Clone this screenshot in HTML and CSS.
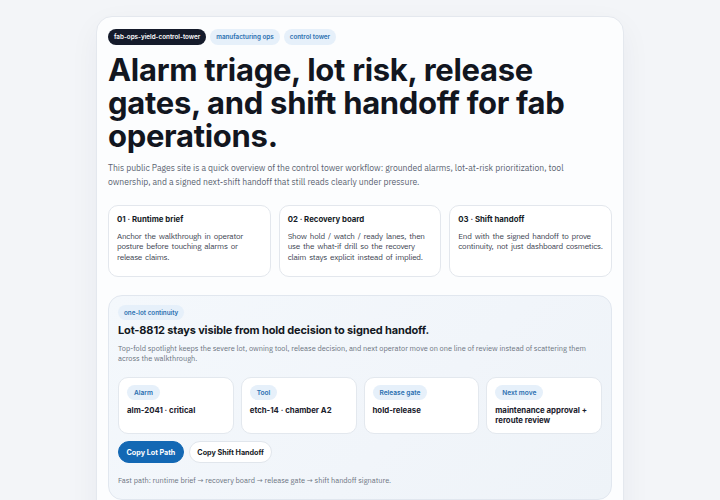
FILE: index.html
```html
<!DOCTYPE html>
<html lang="en">
<head>
<meta charset="utf-8">
<title>Fab Ops Yield Control Tower</title>
<link rel="stylesheet" href="styles.css">
</head>
<body>
<main class="shell">
  <section class="hero">
    <div class="chips">
      <span class="chip chip-dark">fab-ops-yield-control-tower</span>
      <span class="chip chip-soft">manufacturing ops</span>
      <span class="chip chip-soft">control tower</span>
    </div>
    <h1 class="title">Alarm triage, lot risk, release gates, and shift handoff for fab operations.</h1>
    <p class="lede">This public Pages site is a quick overview of the control tower workflow: grounded alarms, lot-at-risk prioritization, tool ownership, and a signed next-shift handoff that still reads clearly under pressure.</p>

    <div class="steps">
      <article class="step">
        <h2 class="step-title">01 · Runtime brief</h2>
        <p class="step-text">Anchor the walkthrough in operator posture before touching alarms or release claims.</p>
      </article>
      <article class="step">
        <h2 class="step-title">02 · Recovery board</h2>
        <p class="step-text">Show hold / watch / ready lanes, then use the what-if drill so the recovery claim stays explicit instead of implied.</p>
      </article>
      <article class="step">
        <h2 class="step-title">03 · Shift handoff</h2>
        <p class="step-text">End with the signed handoff to prove continuity, not just dashboard cosmetics.</p>
      </article>
    </div>

    <section class="spotlight">
      <span class="chip chip-soft chip-block">one-lot continuity</span>
      <h2 class="spot-title">Lot-8812 stays visible from hold decision to signed handoff.</h2>
      <p class="spot-text">Top-fold spotlight keeps the severe lot, owning tool, release decision, and next operator move on one line of review instead of scattering them across the walkthrough.</p>

      <div class="facts">
        <div class="fact">
          <span class="chip chip-soft chip-tag">Alarm</span>
          <strong class="fact-value">alm-2041 · critical</strong>
        </div>
        <div class="fact">
          <span class="chip chip-soft chip-tag">Tool</span>
          <strong class="fact-value">etch-14 · chamber A2</strong>
        </div>
        <div class="fact">
          <span class="chip chip-soft chip-tag">Release gate</span>
          <strong class="fact-value">hold-release</strong>
        </div>
        <div class="fact">
          <span class="chip chip-soft chip-tag">Next move</span>
          <strong class="fact-value">maintenance approval + reroute review</strong>
        </div>
      </div>

      <div class="actions">
        <button class="btn btn-primary" type="button">Copy Lot Path</button>
        <button class="btn btn-ghost" type="button">Copy Shift Handoff</button>
      </div>

      <p class="fast-path">Fast path: runtime brief → recovery board → release gate → shift handoff signature.</p>
    </section>
  </section>
</main>
</body>
</html>
```
FILE: styles.css
```css
* { box-sizing: border-box; }

html, body {
  margin: 0;
  padding: 0;
}

body {
  background: #f3f5f8;
  font-family: "IBM Plex Sans", Roboto, "Noto Sans", sans-serif;
  color: #1b2230;
  height: 500px;
  overflow: hidden;
}

.shell {
  padding: 16px 96px 0;
}

.hero {
  background: #fcfdfe;
  border: 1px solid #e4e8ee;
  border-radius: 16px;
  padding: 12px 11px 40px;
  box-shadow: 0 10px 30px rgba(20, 40, 80, 0.05);
}

.chips {
  display: flex;
  gap: 4px;
  align-items: center;
}

.chip {
  display: inline-flex;
  align-items: center;
  height: 16px;
  padding: 0 6px;
  border-radius: 999px;
  font-family: Inter, "Noto Sans", sans-serif;
  font-size: 6.3px;
  font-weight: 600;
  white-space: nowrap;
}

.chip-block {
  display: flex;
  width: fit-content;
  height: 15px;
}

.chip-tag {
  height: 15px;
  font-size: 6.6px;
  padding: 0 7px;
}

.chip-dark {
  background: #151b2b;
  color: #ffffff;
}

.chip-soft {
  background: #e6f0fa;
  color: #2a6fb0;
}

.title {
  margin: 8px 0 0;
  max-width: 480px;
  font-family: Inter, "Noto Sans", sans-serif;
  font-size: 31px;
  line-height: 33px;
  font-weight: 700;
  letter-spacing: -0.3px;
  color: #12161f;
}

.lede {
  margin: 9px 0 0;
  font-size: 8.6px;
  line-height: 14px;
  color: #5a6371;
  max-width: 480px;
}

.steps {
  margin-top: 16px;
  display: grid;
  grid-template-columns: repeat(3, 1fr);
  gap: 8px;
}

.step {
  background: #ffffff;
  border: 1px solid #e3e7ed;
  border-radius: 10px;
  padding: 8px 6px 6px 8px;
  min-height: 72px;
}

.step-title {
  margin: 0;
  font-family: Inter, "Noto Sans", sans-serif;
  font-size: 7.8px;
  font-weight: 700;
  color: #151b26;
}

.step-text {
  margin: 7px 0 0;
  font-size: 8.1px;
  line-height: 10.3px;
  letter-spacing: -0.24px;
  word-spacing: 1.4px;
  color: #3b4350;
}

.spotlight {
  margin-top: 18px;
  border: 1px solid #e1e7ef;
  border-radius: 14px;
  padding: 9px 9px 14px;
  background: linear-gradient(135deg, #f4f8fc 0%, #f1f5fa 60%, #eef3f8 100%);
}

.spot-title {
  margin: 3px 0 0;
  font-family: Inter, "Noto Sans", sans-serif;
  font-size: 11px;
  line-height: 14px;
  font-weight: 700;
  letter-spacing: -0.15px;
  color: #131822;
}

.spot-text {
  margin: 6px 0 0;
  font-size: 7.4px;
  line-height: 10px;
  color: #6b7380;
}

.facts {
  margin-top: 14px;
  display: grid;
  grid-template-columns: repeat(4, 1fr);
  gap: 7px;
}

.fact {
  background: #ffffff;
  border: 1px solid #e3e8ee;
  border-radius: 10px;
  padding: 7px 8px 8px;
  min-height: 55px;
  display: flex;
  flex-direction: column;
  align-items: flex-start;
  gap: 5px;
}

.fact-value {
  font-family: Inter, "Noto Sans", sans-serif;
  font-size: 7.8px;
  line-height: 10px;
  font-weight: 700;
  color: #1a202b;
}

.actions {
  margin-top: 7px;
  display: flex;
  gap: 5px;
}

.btn {
  height: 22px;
  padding: 0 7.5px;
  border-radius: 999px;
  font-family: Inter, "Noto Sans", sans-serif;
  font-size: 7.2px;
  font-weight: 700;
  cursor: pointer;
}

.btn-primary {
  background: #1368b4;
  color: #ffffff;
  border: 1px solid #1368b4;
}

.btn-ghost {
  background: #ffffff;
  color: #141a24;
  border: 1px solid #e1e6ec;
}

.fast-path {
  margin: 12px 0 0;
  font-size: 7.4px;
  line-height: 10px;
  color: #6b7380;
}
```
